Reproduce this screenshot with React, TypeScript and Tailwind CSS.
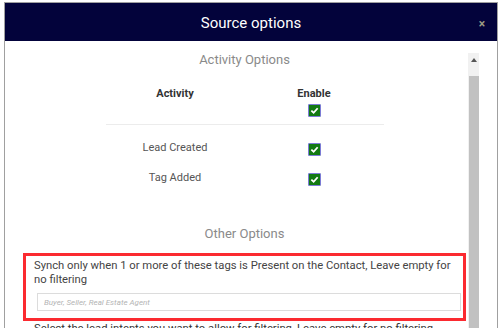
import React from 'react'

const Check = () => (
    <span className="inline-flex w-[13px] h-[13px] items-center justify-center bg-[#137a13] border border-[#7b7bd6] rounded-[1px]">
        <svg width="9" height="9" viewBox="0 0 10 10">
            <path d="M1.5 5.2 L4 7.5 L8.5 2.5" stroke="white" strokeWidth="2" fill="none" />
        </svg>
    </span>
)

const rows = ['Lead Created', 'Tag Added']

const App = () => {
    return (
        <div className="w-[501px] h-[328px] overflow-hidden bg-white font-['Roboto',_'Liberation_Sans',_sans-serif]">
            <div className="ml-[4px] mt-[2px] w-[494px] h-[340px] border border-[#a0a0a0] flex flex-col">
                <div className="h-[38px] bg-[#03033b] flex items-center justify-center relative shrink-0 pt-[2px]">
                    <span className="text-white text-[15px]">Source options</span>
                    <span className="absolute right-[12px] top-[12px] text-[#9c9c84] text-[12px] font-bold">×</span>
                </div>
                <div className="flex flex-1">
                    <div className="w-[462px] pl-[18px] pr-[1px] pt-[10px]">
                        <div className="text-center text-[13px] leading-[18px] text-[#8a8a8a]">Activity Options</div>
                        <div className="w-[278px] mx-auto mt-[18px]">
                            <div className="flex border-b border-[#ececec] pb-[7px]">
                                <div className="w-1/2 text-center text-[11px] leading-[14px] font-bold text-[#333]">Activity</div>
                                <div className="w-1/2 flex flex-col items-center">
                                    <span className="text-[11px] leading-[14px] font-bold text-[#333]">Enable</span>
                                    <span className="mt-[3px] flex"><Check /></span>
                                </div>
                            </div>
                            <div className="mt-[8px]">
                                {rows.map((r) => (
                                    <div key={r} className="flex h-[30px] items-center">
                                        <div className="w-1/2 text-center text-[11px] text-[#555]">{r}</div>
                                        <div className="w-1/2 flex justify-center pt-[2px]"><Check /></div>
                                    </div>
                                ))}
                            </div>
                        </div>
                        <div className="mt-[32px] text-center text-[13px] leading-[18px] text-[#8a8a8a]">Other Options</div>
                        <div className="mt-[10px] border-[3px] border-[#fb2a30] pl-[8px] pr-[3px] pt-[3px] pb-[6px]">
                            <p className="text-[11.25px] leading-[14px] text-[#444]">
                                Synch only when 1 or more of these tags is Present on the Contact, Leave empty for no filtering
                            </p>
                            <input
                                type="text"
                                placeholder="Buyer, Seller, Real Estate Agent"
                                className="mt-[6px] ml-[3px] w-[424px] h-[18px] border border-[#dcdcdc] px-[6px] text-[8px] italic placeholder:text-[#b4b4b4] outline-none"
                            />
                        </div>
                        <p className="mt-[1px] pl-[11px] text-[11.25px] leading-[14px] text-[#333]">
                            Select the lead intents you want to allow for filtering, Leave empty for no filtering
                        </p>
                    </div>
                    <div className="ml-[1px] mt-[12px] w-[11px] flex flex-col bg-[#f1f1f1]">
                        <div className="h-[23px] flex items-start justify-center pt-[5px]">
                            <svg width="6" height="4" viewBox="0 0 6 4"><path d="M0 4 L3 0 L6 4 Z" fill="#555" /></svg>
                        </div>
                        <div className="flex-1 mx-[0.5px] bg-[#c1c1c1]" />
                    </div>
                </div>
            </div>
        </div>
    )
}

export default App
